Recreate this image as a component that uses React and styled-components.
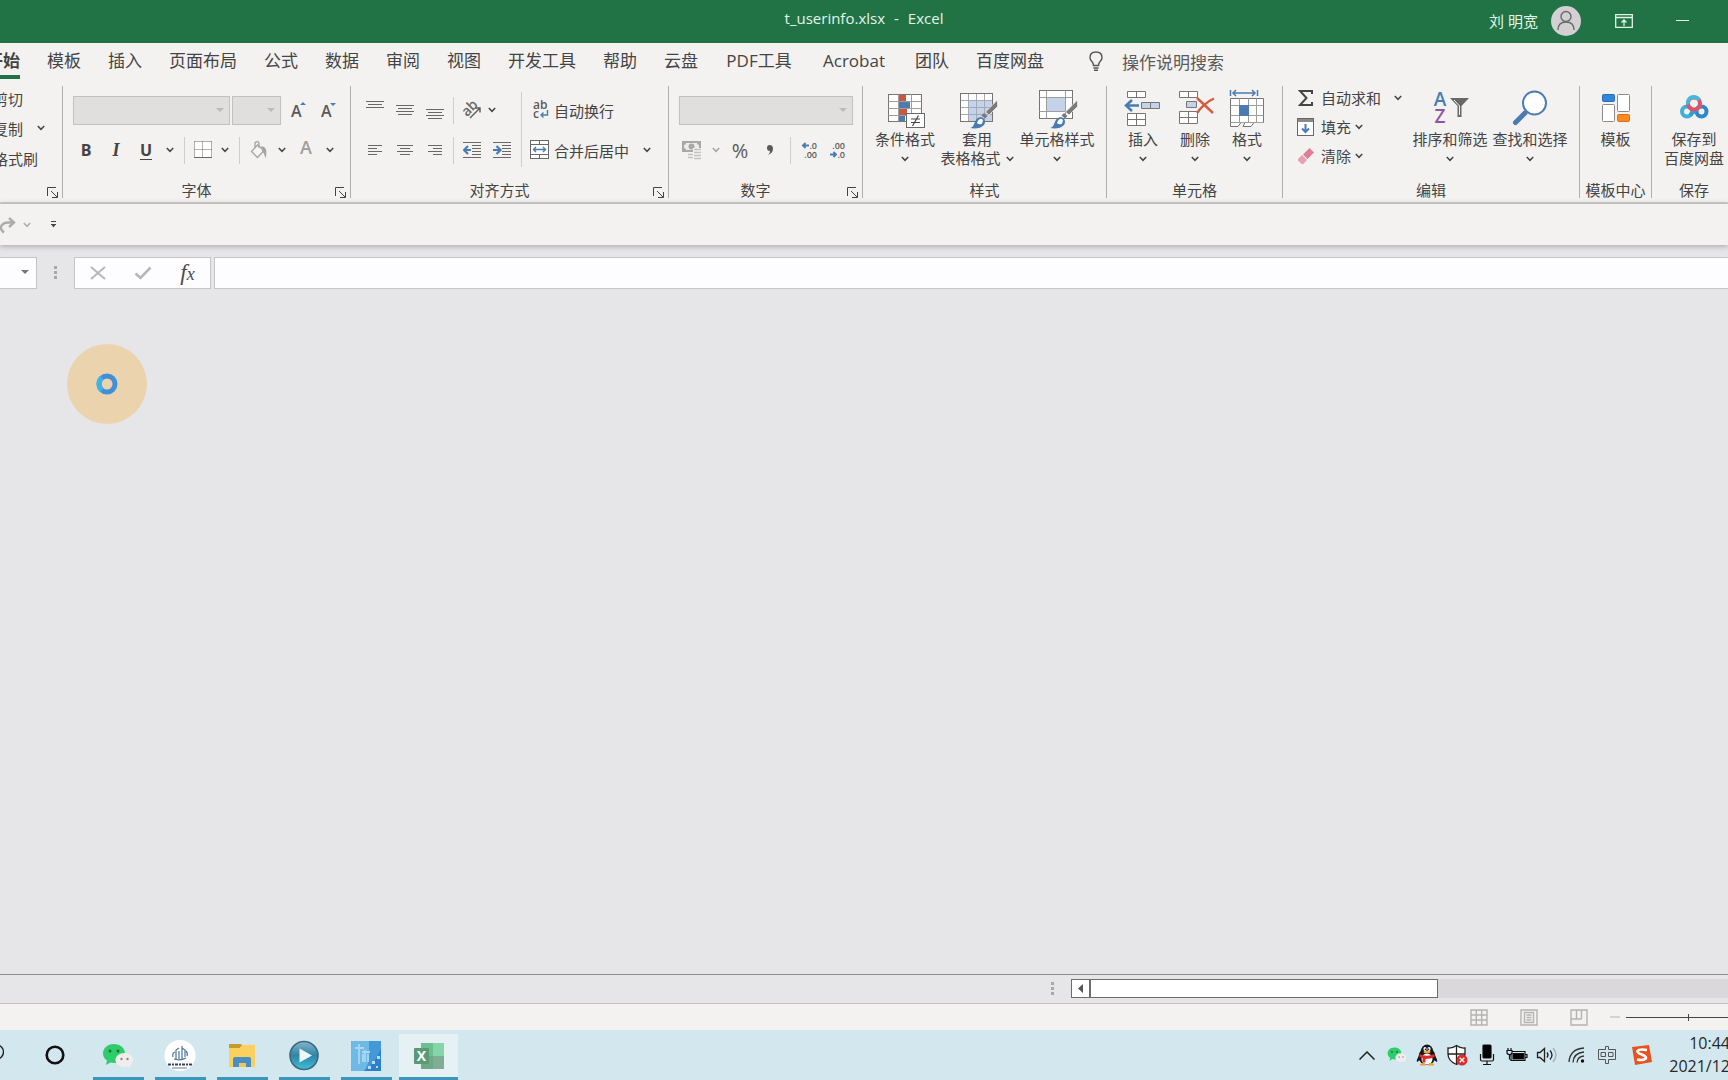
import React from 'react';
import styled, { createGlobalStyle, ThemeProvider } from 'styled-components';

const theme = {
  green: '#217346',
  ribbon: '#f3f2f1',
  sheet: '#e6e6e8',
  text: '#444444',
  line: '#b1afad',
  blue: '#4a7cb3',
  grey: '#6a6866',
  taskbar: '#d3e7ee',
};

const GlobalStyle = createGlobalStyle`
  * { box-sizing: border-box; }
  body {
    margin: 0;
    overflow: hidden;
    font-family: "Open Sans", "Noto Sans CJK SC", sans-serif;
    font-size: 15px;
    color: #444444;
  }
  button, input, select { font: inherit; color: inherit; }
  svg { display: block; flex: none; }
`;

const Window = styled.div`
  display: flex;
  flex-direction: column;
  height: 100vh;
  overflow: hidden;
  background: ${(props) => props.theme.sheet};
`;

const PlainButton = styled.button`
  display: flex;
  align-items: center;
  justify-content: center;
  flex: none;
  padding: 0;
  border: 0;
  background: none;
  white-space: nowrap;
`;

/* ---------- title bar ---------- */

const TitleBar = styled.header`
  display: grid;
  grid-template-columns: 1fr auto 1fr;
  align-items: center;
  flex: none;
  height: 43px;
  background: ${(props) => props.theme.green};
  color: #e2f5e9;
`;

const Title = styled.h1`
  grid-column: 2;
  display: flex;
  gap: 9px;
  margin: 0;
  padding-bottom: 8px;
  font-size: 15px;
  font-weight: 400;
  line-height: 20px;
`;

const TitleTools = styled.div`
  display: flex;
  align-items: center;
  justify-content: flex-end;
  padding: 0 17px 2px 0;
`;

const User = styled(PlainButton)`
  gap: 13px;
  margin-right: 14px;
`;

const TitleButton = styled(PlainButton)`
  width: 58px;
  height: 40px;
`;

/* ---------- tabs ---------- */

const Top = styled.div`
  flex: none;
  background: ${(props) => props.theme.ribbon};
`;

const TabBar = styled.nav`
  display: flex;
  flex: none;
  gap: 27px;
  height: 43px;
  margin-left: -14px;
  font-size: 17px;
`;

const Tab = styled.a`
  min-width: ${(props) => (props.$wide ? '4em' : '2em')};
  height: 36px;
  line-height: 36px;
  color: inherit;
  text-align: center;
  text-decoration: none;
  white-space: nowrap;
  font-weight: ${(props) => (props.$active ? 700 : 400)};
  border-bottom: 4px solid ${(props) => (props.$active ? props.theme.green : 'transparent')};
`;

const TellMe = styled(PlainButton)`
  gap: 19px;
  height: 36px;
  margin-left: 18px;
  color: #5c5a58;
`;

/* ---------- ribbon ---------- */

const Ribbon = styled.div`
  display: flex;
  height: 118px;
  border-bottom: 2px solid #d2d0ce;
`;

const GroupBox = styled.section`
  display: flex;
  flex-direction: column;
  flex: none;
  width: ${(props) => props.$width}px;
  height: 112px;
  border-right: 1px solid ${(props) => props.theme.line};
  &:last-child {
    border-right: 0;
  }
`;

const GroupBody = styled.div`
  display: flex;
  flex: 1;
  padding-left: ${(props) => props.$pad || 0}px;
`;

const GroupFooter = styled.div`
  display: flex;
  align-items: center;
  height: 18px;
`;

const GroupLabel = styled.div`
  flex: 1;
  padding-top: 2px;
  text-align: center;
  line-height: 18px;
  white-space: nowrap;
`;

const Launcher = styled(PlainButton)`
  width: 20px;
  height: 18px;
  align-items: flex-end;
`;

const Stack = styled.div`
  display: flex;
  flex-direction: column;
  flex: none;
  width: ${(props) => (props.$width ? `${props.$width}px` : 'auto')};
  margin-top: ${(props) => (props.$dense ? -3 : 4)}px;
`;

const ToolRow = styled.div`
  display: flex;
  align-items: center;
  height: ${(props) => props.$height || 40}px;
`;

const ClipRow = styled.div`
  display: flex;
  align-items: center;
  height: 30px;
  margin-left: -7px;
  white-space: nowrap;
`;

const Tool = styled(PlainButton)`
  width: ${(props) => (props.$width ? `${props.$width}px` : 'auto')};
  height: 28px;
`;

const ToolIcon = styled.span`
  display: flex;
  justify-content: center;
  width: ${(props) => props.$width}px;
`;

const Letter = styled.span`
  font-size: ${(props) => (props.$italic ? 18 : 16)}px;
  font-weight: 700;
  font-style: ${(props) => (props.$italic ? 'italic' : 'normal')};
  font-family: ${(props) => (props.$italic ? '"Liberation Serif", serif' : 'inherit')};
  text-decoration: ${(props) => (props.$underline ? 'underline' : 'none')};
  text-underline-offset: 3px;
`;

const Percent = styled.span`
  font-size: 20px;
  color: #5c5a58;
`;

const Divider = styled.span`
  flex: none;
  width: 1px;
  height: ${(props) => props.$height || 27}px;
  margin: ${(props) => props.$top || 0}px ${(props) => props.$gap || 5}px 0;
  background: #cfcdcb;
`;

const ComboBox = styled.label`
  display: grid;
  align-items: center;
  width: ${(props) => props.$width}px;
  height: 29px;
  margin-left: 2px;
  > * {
    grid-area: 1 / 1;
  }
  svg {
    justify-self: end;
    margin-right: 6px;
  }
`;

const ComboSelect = styled.select`
  appearance: none;
  width: 100%;
  height: 100%;
  border: 1px solid #c3c1c0;
  border-radius: 0;
  background: #e1dfde;
  opacity: 1;
`;

const BigButton = styled.button`
  display: flex;
  flex-direction: column;
  align-items: center;
  flex: none;
  width: ${(props) => props.$width}px;
  padding: 0;
  border: 0;
  background: none;
  line-height: 19px;
  white-space: nowrap;
`;

const BigLine = styled.span`
  display: flex;
  align-items: center;
  gap: 5px;
  height: 19px;
`;

/* ---------- quick access + formula bar ---------- */

const QuickAccess = styled.div`
  display: flex;
  align-items: center;
  height: 41px;
  box-shadow: 0 1px 6px rgba(0, 0, 0, 0.3);
`;

const FormulaBar = styled.div`
  display: flex;
  flex: none;
  height: 44px;
  padding-top: 12px;
`;

const NameBox = styled.div`
  display: flex;
  width: 37px;
  height: 32px;
  border: 1px solid #c6c4c6;
  border-left: 0;
  background: #fdfcff;
`;

const BareInput = styled.input`
  flex: 1;
  min-width: 0;
  width: 100%;
  padding: 0 4px;
  border: 0;
  outline: 0;
  background: transparent;
`;

const Grip = styled.span`
  display: flex;
  align-items: center;
  justify-content: center;
  width: 37px;
`;

const FormulaButtons = styled.div`
  display: flex;
  margin-right: 3px;
  border: 1px solid #c6c4c6;
  background: #fdfcff;
`;

const FormulaButton = styled(PlainButton)`
  width: 45px;
  height: 30px;
`;

const Fx = styled.span`
  font-family: "Liberation Serif", serif;
  font-style: italic;
  font-size: 23px;
  line-height: 24px;
  color: #4c4a4c;
  small {
    font-size: 18px;
  }
`;

const FormulaField = styled.div`
  display: flex;
  flex: 1;
  border: 1px solid #c6c4c6;
  border-right: 0;
  background: #fdfcff;
`;

/* ---------- work area ---------- */

const Canvas = styled.main`
  position: relative;
  flex: 1;
`;

const BusyPointer = styled.div`
  position: absolute;
  left: 67px;
  top: 55px;
  display: flex;
  align-items: center;
  justify-content: center;
  width: 80px;
  height: 80px;
  border-radius: 50%;
  background: #ebd3ae;
`;

const SheetBar = styled.div`
  display: flex;
  align-items: center;
  justify-content: flex-end;
  flex: none;
  height: 30px;
  padding-bottom: 1px;
  border-top: 1px solid #8f8d8f;
  border-bottom: 1px solid #c4c2c4;
`;

const ScrollBar = styled.div`
  display: flex;
  flex: 0 0 38%;
  height: 19px;
  background: #dad8da;
`;

const ScrollArrow = styled(PlainButton)`
  width: 19px;
  border: 1px solid #6e6c6e;
  background: #ffffff;
`;

const ScrollThumb = styled.div`
  width: 53%;
  border: 1px solid #6e6c6e;
  background: #ffffff;
`;

const StatusWrap = styled.div`
  flex: none;
  overflow: hidden;
  background: ${(props) => props.theme.ribbon};
`;

const StatusBar = styled.footer`
  display: flex;
  align-items: center;
  justify-content: flex-end;
  height: 26px;
  margin-right: -22px;
`;

const ViewButton = styled(PlainButton)`
  width: 50px;
`;

const ZoomOut = styled(PlainButton)`
  width: 22px;
  height: 20px;
`;

const ZoomSlider = styled.input`
  appearance: none;
  width: 124px;
  height: 20px;
  margin: 0;
  background:
    linear-gradient(#484644, #484644) center / 1px 7px no-repeat,
    linear-gradient(#484644, #484644) center / 100% 1px no-repeat;
  &::-webkit-slider-thumb {
    appearance: none;
    width: 5px;
    height: 13px;
    background: #484644;
  }
`;

/* ---------- taskbar ---------- */

const TaskBar = styled.div`
  display: flex;
  flex: none;
  height: 50px;
  background: ${(props) => props.theme.taskbar};
`;

const SystemButton = styled(PlainButton)`
  width: ${(props) => props.$width}px;
  height: 50px;
`;

const SearchShift = styled.span`
  margin-left: -36px;
`;

const TaskSlot = styled.div`
  display: flex;
  width: 62px;
  padding: ${(props) => (props.$active ? '4px 1px 0 2px' : '4px 5px 0 6px')};
`;

const TaskButton = styled(PlainButton)`
  flex: 1;
  height: 46px;
  padding-right: 2px;
  border-bottom: 3px solid #3a97bb;
  background: ${(props) => (props.$active ? '#e6f1f6' : 'none')};
`;

const Tray = styled.div`
  display: flex;
  align-items: center;
  margin-left: auto;
  margin-right: -2px;
`;

const TrayButton = styled(PlainButton)`
  width: ${(props) => props.$width || 30}px;
  height: 50px;
`;

const Clock = styled.div`
  display: flex;
  flex-direction: column;
  align-items: flex-end;
  padding-left: 7px;
  font-size: 16px;
  line-height: 23px;
  color: #26282b;
`;

/* ---------- small glyphs ---------- */

const Chevron = ({ color = '#444' }) => (
  <svg width="8" height="6" viewBox="0 0 8 6" fill="none" stroke={color} strokeWidth="1.5">
    <path d="M.8 1 4 4.3 7.2 1" />
  </svg>
);

const Triangle = ({ color = '#bdbbba' }) => (
  <svg width="8" height="4" viewBox="0 0 8 4" fill={color}>
    <path d="M0 0h8L4 4z" />
  </svg>
);

const Dots = () => (
  <svg width="4" height="14" viewBox="0 0 4 14" fill="#a9a7a9">
    <path d="M0 0h3v3H0zM0 5h3v3H0zM0 10h3v3H0z" />
  </svg>
);

const Lines = ({ rows }) => (
  <svg width="18" height="20" viewBox="0 0 18 20" stroke="#6a6866">
    {rows.map(([x1, x2, y]) => (
      <path key={y} d={`M${x1} ${y}.5H${x2}`} />
    ))}
  </svg>
);

const alignTop = [[0, 18, 1], [2, 16, 4], [0, 18, 7]];
const alignMiddle = [[0, 18, 5], [2, 16, 8], [0, 18, 11], [2, 16, 14]];
const alignBottom = [[0, 18, 9], [2, 16, 12], [0, 18, 15], [2, 16, 18]];
const alignLeft = [[2, 16, 5], [2, 11, 8], [2, 16, 11], [2, 11, 14]];
const alignCenter = [[1, 17, 5], [4, 14, 8], [1, 17, 11], [4, 14, 14]];
const alignRight = [[2, 16, 5], [7, 16, 8], [2, 16, 11], [7, 16, 14]];

const GrowFont = ({ down }) => (
  <svg width="16" height="20" viewBox="0 0 16 20">
    <text x="0" y="17" fontSize="16" fontWeight="600" fill="#5c5a58">A</text>
    <path d={down ? 'M9 3h6l-3 3z' : 'M9 5h6l-3-3z'} fill="#4a7cb3" />
  </svg>
);

const BordersIcon = () => (
  <svg width="18" height="18" viewBox="0 0 18 18" fill="none" stroke="#6a6866">
    <path d="M.5 .5h17v16H.5z" fill="#fff" stroke="none" />
    <path d="M.5 .5h17M.5 8.5h17M.5 .5v16M8.5 .5v16M17.5 .5v16" strokeDasharray="1 1" />
    <path d="M0 16.5h18" />
  </svg>
);

const BucketIcon = () => (
  <svg width="18" height="18" viewBox="0 0 18 18" fill="none" stroke="#a6a4a2" strokeWidth="1.3">
    <path d="M7.500 4 1.500 10.500l6 6L14 9.500z" fill="#f5f4f3" />
    <path d="M5 7V3q0-2.300 2-2.300T9 3v4" />
    <path d="M12 6q5 1 3.500 9-2-5-3-6z" fill="#a6a4a2" />
  </svg>
);

const OrientationIcon = () => (
  <svg width="20" height="20" viewBox="0 0 20 20">
    <text x="1" y="14" fontSize="14" fontWeight="600" fill="#6a6866" transform="rotate(-45 7 11)">ab</text>
    <path d="M8 18 18 8M13.500 8H18v4.500" fill="none" stroke="#5c5a58" strokeWidth="1.400" />
  </svg>
);

const IndentIcon = ({ right }) => (
  <svg width="18" height="18" viewBox="0 0 18 18">
    <path d="M0 1.500h18M9 4.500h9M9 7.500h9M9 10.500h9M9 13.500h9M0 16.500h18" stroke="#6a6866" />
    <path
      d={right ? 'M0 9h6M3.500 5l4 4-4 4' : 'M8 9H2M5 5 1 9l4 4'}
      fill="none"
      stroke="#4a7cb3"
      strokeWidth="2.200"
    />
  </svg>
);

const WrapIcon = () => (
  <svg width="18" height="20" viewBox="0 0 18 20">
    <text x="2" y="9" fontSize="12" fontWeight="600" fill="#5c5a58">ab</text>
    <text x="2" y="18" fontSize="12" fontWeight="600" fill="#5c5a58">c</text>
    <path d="M16.500 10v5H10M12.500 12.500 10 15l2.500 2.500" fill="none" stroke="#4a7cb3" strokeWidth="1.400" />
  </svg>
);

const MergeIcon = () => (
  <svg width="20" height="20" viewBox="0 0 20 20" fill="none" stroke="#6a6866">
    <rect x=".5" y=".5" width="18" height="18" fill="#fff" />
    <path d="M.5 4.500h18M.5 14.500h18M9.500 .5v4M9.500 14.500v4" />
    <path d="M3.500 9.500h12M6 7 3.500 9.500 6 12M13 7l2.500 2.500L13 12" stroke="#4a7cb3" strokeWidth="1.400" />
  </svg>
);

const CurrencyIcon = () => (
  <svg width="20" height="20" viewBox="0 0 20 20">
    <rect x="0" y="1" width="19" height="11" fill="#aaa8a6" />
    <path d="M4 3h11q0 2 2 2v3q-2 0-2 2H4q0-2-2-2V5q2 0 2-2z" fill="#efedec" />
    <circle cx="9.500" cy="6.500" r="3" fill="#aaa8a6" />
    <rect x="11" y="8" width="9" height="11" fill="#f3f2f1" />
    <path d="M12 9.500h7M12 12.500h7M6 14.500h5M12 15.500h7M6 17.500h5M12 18.500h7" stroke="#c4c2c0" strokeWidth="1.500" />
  </svg>
);

const DecimalIcon = ({ more }) => (
  <svg width="20" height="20" viewBox="0 0 20 20" fontSize="9" fontWeight="600" fill="#5c5a58">
    <text x="17" y="9" textAnchor="end">{more ? '.0' : '.00'}</text>
    <text x="17" y="18" textAnchor="end">{more ? '.00' : '.0'}</text>
    <path
      d={more ? 'M9 5.500H3M5.500 3 3 5.500 5.500 8' : 'M2 14.500h6M5.500 12 8 14.500 5.500 17'}
      fill="none"
      stroke="#4a7cb3"
      strokeWidth="1.900"
    />
  </svg>
);

const LauncherIcon = () => (
  <svg width="11" height="11" viewBox="0 0 11 11" fill="none" stroke="#444">
    <path d="M.5 9V.5H9M4 4l6 6M10.500 5v5.500H5" />
  </svg>
);

/* ---------- large ribbon drawings ---------- */

const Big = (props) => (
  <svg width="40" height="44" viewBox="0 0 40 44" fill="none" overflow="visible" {...props} />
);

const Brush = () => (
  <g>
    <path d="M40.500 14v6.500L32 29l-3.500-3z" fill="#7c7a78" stroke="#fff" strokeWidth=".6" />
    <path d="m27 27 3.500 3-2.500 2.500-3.500-3z" fill="#7c7a78" />
    <path d="M13 42c6-1 3-10 11-11 4 1 5 5 3 8-3 3.500-9 4-14 3z" fill="#4a7cb3" />
    <path d="M20 37q2-5 5-4 2 2-.5 5-2.500 1-4.500-1z" fill="#fff" />
  </g>
);

const ConditionalIcon = () => (
  <Big>
    <rect x="3.500" y="8.500" width="33" height="27" fill="#fff" stroke="#777573" />
    <path d="M3.500 15.500h33M3.500 22.500h33M3.500 29.500h33M13.500 8.500v27M26.500 8.500v27" stroke="#a09e9c" />
    <path d="M14 9h7v6h-7zM14 23h8v6h-8z" fill="#c8593f" />
    <path d="M14 16h11v6H14zM14 30h6v5h-6z" fill="#4a7cb3" />
    <rect x="21.500" y="27.500" width="18" height="14" fill="#fff" stroke="#6a6866" />
    <path d="M26 33h9M26 36.500h9M33.500 29.500l-6 10.500" stroke="#444" strokeWidth="1.200" />
  </Big>
);

const TableIcon = () => (
  <Big>
    <rect x="3.500" y="7.500" width="32" height="28" fill="#fff" />
    <path d="M12 15h23v20H12z" fill="#c5d3ea" />
    <path d="M3.500 14.500h32M3.500 21.500h32M3.500 28.500h32M11.500 7.500v28M19.500 7.500v28M27.500 7.500v28" stroke="#a3a9b5" />
    <rect x="3.500" y="7.500" width="32" height="28" stroke="#777573" />
    <Brush />
  </Big>
);

const CellStyleIcon = () => (
  <Big>
    <rect x="2.500" y="4.500" width="33" height="28" fill="#fff" stroke="#777573" />
    <path d="M10 12h18v13H10z" fill="#c5d3ea" />
    <path d="M2.500 11.500h33M2.500 25.500h33M9.500 4.500v28M28.500 4.500v28" stroke="#a09e9c" />
    <Brush />
  </Big>
);

const InsertIcon = () => (
  <Big stroke="#777573">
    <path d="M4.500 5.500h18v6h-18zM13.500 5.500v6M4.500 27.500h18v12h-18zM13.500 27.500v12M4.500 33.500h18" fill="#fff" />
    <path d="M18.500 16.500h18v6h-18zM27.500 16.500v6" fill="#c5d3ea" />
    <path d="M16 19.500H3M9 14l-6 5.500L9 25" stroke="#4a7cb3" strokeWidth="2.500" />
  </Big>
);

const DeleteIcon = () => (
  <Big stroke="#777573">
    <path d="M4.500 5.500h18v6h-18zM13.500 5.500v6M4.500 25.500h18v12h-18zM13.500 25.500v12M4.500 31.500h18" fill="#fff" />
    <path d="M11.500 15.500h10v6h-10z" fill="#c5d3ea" />
    <path d="m22 12 16 15M39 12.500Q29 17 22 27" stroke="#d65b3d" strokeWidth="2.400" />
  </Big>
);

const FormatIcon = () => (
  <Big stroke="#777573">
    <path d="M3.500 4v6M30.500 4v6M6 7h22M9 4 6 7l3 3M25 4l3 3-3 3" stroke="#4a7cb3" strokeWidth="1.500" />
    <path d="M3.500 12.500h33v24H27l-3 4h-8l2-4h-4l-3 4H3.500z" fill="#fff" />
    <path d="M3.500 19.500h33M3.500 29.500h33M3.500 36.500h33M12.500 12.500v24M21.500 12.500v24M29.500 12.500v24" stroke="#a09e9c" />
    <path d="M12 19h10v11H12z" fill="#4a7cb3" stroke="none" />
  </Big>
);

const SortIcon = () => (
  <Big>
    <text x="10" y="20" fontSize="19" fontWeight="600" textAnchor="middle" fill="#4a7cb3">A</text>
    <text x="10" y="37" fontSize="19" fontWeight="600" textAnchor="middle" fill="#8f57a3">Z</text>
    <path d="M20 12h19l-7.500 8v11h-4V20z" fill="#6a6866" />
    <path d="m24 14 5.500 6v9" stroke="#f3f2f1" />
  </Big>
);

const FindIcon = () => (
  <Big stroke="#4a7cb3">
    <path d="M15 27 5.500 36.500" strokeWidth="5" strokeLinecap="round" />
    <circle cx="24.500" cy="17" r="11.500" fill="#fff" strokeWidth="2" />
  </Big>
);

const TemplateIcon = () => (
  <Big>
    <rect x="6.500" y="8.500" width="12" height="7" rx="1" fill="#2f88e0" stroke="#2b6cb5" />
    <rect x="21.500" y="8.500" width="12" height="17" rx="1" fill="#fff" stroke="#8d8b89" />
    <rect x="6.500" y="18.500" width="12" height="17" rx="1" fill="#fff" stroke="#8d8b89" />
    <rect x="21.500" y="28.500" width="12" height="7" rx="1" fill="#ff8a1c" stroke="#d4711a" />
  </Big>
);

const NetdiskIcon = () => (
  <Big strokeWidth="4">
    <circle cx="13" cy="25.500" r="5" stroke="#3cb2d8" />
    <circle cx="27.500" cy="25.500" r="5" stroke="#2f86c9" />
    <path d="m16 29 10-9" stroke="#2f9fd0" />
    <circle cx="20" cy="17.500" r="6" stroke="#e0526a" />
    <path d="M14 18.500a6 6 0 0 1 11-4.500" stroke="#45b9dc" />
  </Big>
);

const SigmaIcon = () => (
  <svg width="16" height="18" viewBox="0 0 16 18" fill="none" stroke="#444" strokeWidth="2">
    <path d="M14 5V2H2l6.500 7L2 16h12v-3" />
  </svg>
);

const FillIcon = () => (
  <svg width="18" height="18" viewBox="0 0 18 18" fill="none">
    <rect x=".5" y=".5" width="16" height="17" fill="#fff" stroke="#6a6866" />
    <path d="M1 1h15v3H1z" fill="#8a8886" />
    <path d="M8.500 6v8M5 10.500 8.500 14l3.500-3.500" stroke="#4a7cb3" strokeWidth="2" />
  </svg>
);

const EraserIcon = () => (
  <svg width="18" height="18" viewBox="0 0 18 18">
    <path d="m1 12 4-4 5 5-3.500 4H4.500L1 13.500z" fill="#e8a0b4" />
    <path d="M6 7.500 12.500 1 17 5.500 10.500 12z" fill="#df7c98" />
  </svg>
);

/* ---------- taskbar drawings ---------- */

const WechatIcon = ({ size = 32 }) => (
  <svg width={size} height={size} viewBox="0 0 32 32">
    <path d="M12 4C5 4 1 8.500 1 13.500c0 3 1.600 5.500 4 7L4 25l4.500-2.500c1 .3 2.300.5 3.500.5 6 0 11-4 11-9.500S18 4 12 4z" fill="#2ecc6b" />
    <circle cx="8" cy="11" r="1.500" fill="#1d6b3c" />
    <circle cx="16" cy="11" r="1.500" fill="#1d6b3c" />
    <path d="M22.500 13c-5 0-9 3-9 7s4 7 9 7c1 0 2-.2 3-.5l3.500 1.500-.8-3c2-1.200 3-3 3-5 0-4-3.700-7-8.700-7z" fill="#f1edec" />
    <circle cx="19.500" cy="19" r="1.200" fill="#8d8b89" />
    <circle cx="25.500" cy="19" r="1.200" fill="#8d8b89" />
  </svg>
);

const NavicatIcon = () => (
  <svg width="32" height="32" viewBox="0 0 32 32" fill="none">
    <circle cx="16" cy="15.500" r="15.500" fill="#fff" />
    <path d="M9 17q-1-4 2-5M12 19V10l3-2M15 19v-8M18 20V6M21 17v-7l-3-2M23 16q1-3-1-5M10 19q6 2 12-1" stroke="#4c7597" strokeWidth="1.200" />
    <path d="M4 24.500h24" stroke="#35405e" strokeWidth="2" strokeDasharray="3 1 2 1" />
    <path d="M8 28h15" stroke="#6f7791" />
  </svg>
);

const FolderIcon = () => (
  <svg width="32" height="32" viewBox="0 0 32 32">
    <path d="M3 4h12l2 3h-3v3H3z" fill="#c99a2a" />
    <path d="M3 8h11l2-3h13v22H3z" fill="#fbd05f" />
    <path d="M7 27V19q0-2 2-2h14q2 0 2 2v8h-5v-4h-7v4z" fill="#4a8fc4" />
    <path d="M13 23h7v4h-7z" fill="#f7c647" />
  </svg>
);

const PlayerIcon = () => (
  <svg width="32" height="32" viewBox="0 0 32 32">
    <defs>
      <linearGradient id="player" x1="0" y1="0" x2="0" y2="1">
        <stop offset="0" stopColor="#86b4c8" />
        <stop offset=".5" stopColor="#2f85a8" />
        <stop offset="1" stopColor="#3fc0d8" />
      </linearGradient>
    </defs>
    <circle cx="16" cy="15.500" r="14" fill="url(#player)" stroke="#3b6b80" strokeWidth="1.600" />
    <path d="M11.500 8.500 24 15.500l-12.500 7z" fill="#eef6fa" />
  </svg>
);

const DictIcon = () => (
  <svg width="32" height="32" viewBox="0 0 32 32">
    <path d="M1 1h30v30H1z" fill="#6fb9e6" />
    <path d="M31 1v30H14Q26 18 31 1z" fill="#2b7fcb" />
    <path d="M19 1h12v8q-5 12-16 22L19 20z" fill="#4398d8" />
    <path d="M5 8h9M9 4v20M12 12h8M15 10v12M13 22v-8M18 22v-8" stroke="#a9d6f0" strokeWidth="1.800" fill="none" />
    <path d="M22 21h3v3h-3zM27 16h3v3h-3zM18 26h3v3h-3zM26 26h2v2h-2z" fill="#b9dcf2" />
  </svg>
);

const ExcelIcon = () => (
  <svg width="32" height="32" viewBox="0 0 32 32">
    <path d="M9 3h12v13H9z" fill="#6fbd90" />
    <path d="M21 3h11v13H21z" fill="#84d6a9" />
    <path d="M9 16h12v13H9z" fill="#6fa889" />
    <path d="M21 16h11v13H21z" fill="#80ae94" />
    <rect x="2" y="8" width="15" height="16" rx="1" fill="#569b74" />
    <text x="9.500" y="21" fontSize="14" fontWeight="700" textAnchor="middle" fill="#fff">X</text>
  </svg>
);

const Ring = () => (
  <svg width="22" height="22" viewBox="0 0 22 22" fill="none">
    <circle cx="11" cy="11" r="8.300" stroke="#111" strokeWidth="2.600" />
  </svg>
);

const SearchIcon = () => (
  <svg width="22" height="22" viewBox="0 0 22 22" fill="none" stroke="#222" strokeWidth="1.400">
    <circle cx="14.500" cy="8" r="7" />
    <path d="m9 13-7 8" />
  </svg>
);

const PenguinIcon = () => (
  <svg width="22" height="22" viewBox="0 0 22 22">
    <path d="M3 12q-3 4-2 6l3-2zM19 12q3 4 2 6l-3-2z" fill="#15171a" />
    <ellipse cx="11" cy="12.500" rx="8.500" ry="8.500" fill="#15171a" />
    <ellipse cx="11" cy="7" rx="6" ry="6.500" fill="#15171a" />
    <ellipse cx="11" cy="15" rx="5.500" ry="5.500" fill="#fff" />
    <ellipse cx="9" cy="5" rx="1.600" ry="2" fill="#fff" />
    <ellipse cx="13" cy="5" rx="1.600" ry="2" fill="#fff" />
    <circle cx="9.400" cy="5.200" r=".7" />
    <circle cx="12.600" cy="5.200" r=".7" />
    <ellipse cx="11" cy="8" rx="3.500" ry="1.300" fill="#f2a53a" />
    <path d="M3.500 10q7.500 3.500 15 0v3q-4 2-9 2v3.500H6.500V14L3.500 13z" fill="#dd2b2b" />
    <path d="M4 20q3-2 6 0v1.500H4zM12 20q3-2 6 0v1.500h-6z" fill="#eda03a" />
  </svg>
);

const ShieldIcon = () => (
  <svg width="22" height="22" viewBox="0 0 22 22" fill="none">
    <path d="M10.500 1.500q4 3 8.500 2.500v6q0 7-8.500 10.500Q2 17 2 10V4q4.500.5 8.500-2.500z" fill="#fff" stroke="#222" strokeWidth="1.300" />
    <path d="M10.500 2v18M2 10h17" stroke="#222" strokeWidth="1.300" />
    <circle cx="16" cy="16" r="5.500" fill="#dc2b2b" />
    <path d="m13.700 13.700 4.600 4.600m0-4.600-4.600 4.600" stroke="#fff" strokeWidth="1.300" />
  </svg>
);

const MicIcon = () => (
  <svg width="16" height="22" viewBox="0 0 16 22" fill="none" stroke="#111" strokeWidth="1.200">
    <rect x="4" y="1" width="8" height="13" rx="1" fill="#000" />
    <path d="M1.500 10v5.500q0 1.500 1.500 1.500h10q1.500 0 1.500-1.500V10M8 17v3M4 20.500h8" />
  </svg>
);

const BatteryIcon = () => (
  <svg width="22" height="18" viewBox="0 0 22 18" fill="none" stroke="#111" strokeWidth="1.200">
    <path d="M5 5.500h14v9H5zM19.500 8.500h1.500v3h-1.500" />
    <path d="M7 7.500h10.500v5.500H7z" fill="#000" />
    <path d="M2 2v3M5 2v3M1 4.500h5v2q0 2-2.500 2t-2.500-2zM3.500 9v4H5" fill="#d3e7ee" />
  </svg>
);

const VolumeIcon = () => (
  <svg width="22" height="18" viewBox="0 0 22 18" fill="none" stroke="#222" strokeWidth="1.300">
    <path d="M1.500 6.500H4L8.500 2.500v13L4 11.500H1.500zM11 6.500q2 2.500 0 5M14 4.500q4 4.500 0 9" />
    <path d="M17 2q6 7 0 14" stroke="#9fb2b9" />
  </svg>
);

const WifiIcon = () => (
  <svg width="20" height="20" viewBox="0 0 20 20" fill="none" stroke="#333" strokeWidth="1.300">
    <path d="M2 17Q3 4 17 3M6 17.500Q6.500 8 17 7M10 17.500q.5-6 7-6.500" />
    <circle cx="15.500" cy="16" r="1.700" fill="#111" stroke="none" />
  </svg>
);

const ImeIcon = () => (
  <svg width="18" height="18" viewBox="0 0 18 18" fill="none" stroke="#555">
    <path d="M7.500 .5h3v3h7v10h-7v4h-3v-4h-7v-10h7zM3 6.500v4h4.500v-4zM10.500 6.500v4H15v-4z" />
  </svg>
);

const SogouIcon = () => (
  <svg width="22" height="22" viewBox="0 0 22 22" fill="none">
    <path d="m1 3 17-2 3 17-17 3z" fill="#e8521f" />
    <path d="M16 6q-8-1.500-9.500 1C6 11 15 10 15 14q-2 3-9 1.500" stroke="#fff" strokeWidth="2.600" />
  </svg>
);

/* ---------- composed parts ---------- */

const Group = ({ label, width, pad, launcher, children }) => (
  <GroupBox $width={width} aria-label={label || '剪贴板'}>
    <GroupBody $pad={pad}>{children}</GroupBody>
    <GroupFooter>
      <GroupLabel>{label}</GroupLabel>
      {launcher && (
        <Launcher aria-label="更多">
          <LauncherIcon />
        </Launcher>
      )}
    </GroupFooter>
  </GroupBox>
);

const DropArrow = ({ width = 18, color }) => (
  <Tool $width={width} aria-label="展开">
    <Chevron color={color} />
  </Tool>
);

const Combo = ({ width, label }) => (
  <ComboBox $width={width}>
    <ComboSelect disabled aria-label={label} />
    <Triangle />
  </ComboBox>
);

const BigTool = ({ icon, label, second, width, arrow = true }) => (
  <BigButton $width={width}>
    {icon}
    <BigLine>{label}</BigLine>
    <BigLine>
      {second}
      {arrow && <Chevron />}
    </BigLine>
  </BigButton>
);

const EditTool = ({ icon, label, arrow }) => (
  <ToolRow $height={29}>
    <Tool>
      <ToolIcon $width={30}>{icon}</ToolIcon>
      {label}
    </Tool>
    <DropArrow width={arrow} />
  </ToolRow>
);

const tabs = [
  '开始', '模板', '插入', '页面布局', '公式', '数据', '审阅', '视图',
  '开发工具', '帮助', '云盘', 'PDF工具', 'Acrobat', '团队', '百度网盘',
];

const tasks = [
  { name: '微信', icon: <WechatIcon /> },
  { name: 'Navicat', icon: <NavicatIcon /> },
  { name: '文件资源管理器', icon: <FolderIcon /> },
  { name: '播放器', icon: <PlayerIcon /> },
  { name: '词典', icon: <DictIcon /> },
  { name: 'Excel', icon: <ExcelIcon />, active: true },
];

const tray = [
  { name: '微信', icon: <WechatIcon size={20} /> },
  { name: 'QQ', icon: <PenguinIcon /> },
  { name: '安全中心', icon: <ShieldIcon /> },
  { name: '麦克风', icon: <MicIcon /> },
  { name: '电源', icon: <BatteryIcon /> },
  { name: '音量', icon: <VolumeIcon /> },
  { name: '网络', icon: <WifiIcon /> },
  { name: '中文输入', icon: <ImeIcon /> },
];

const App = () => (
  <ThemeProvider theme={theme}>
    <GlobalStyle />
    <Window>
      <TitleBar>
        <Title>
          <span>t_userinfo.xlsx</span>
          <span>-</span>
          <span>Excel</span>
        </Title>
        <TitleTools>
          <User>
            刘 明宽
            <svg width="30" height="30" viewBox="0 0 30 30" fill="none" stroke="#6b696b" strokeWidth="1.400">
              <circle cx="15" cy="15" r="15" fill="#d2d0d2" stroke="none" />
              <circle cx="15" cy="10.500" r="5" />
              <path d="M7 24q0-8 8-8t8 8" />
            </svg>
          </User>
          <TitleButton aria-label="功能区显示选项">
            <svg width="28" height="14" viewBox="0 0 28 14" fill="none" stroke="#e2f5e9" strokeWidth="1.300">
              <path d="M5.700 .7h16.600v12.600H5.700zM5.700 3.500h16.600M14 12V6M11.500 8.500 14 6l2.500 2.500" />
            </svg>
          </TitleButton>
          <TitleButton aria-label="最小化">
            <svg width="13" height="3" viewBox="0 0 13 3" stroke="#e2f5e9">
              <path d="M0 1.500h13" />
            </svg>
          </TitleButton>
        </TitleTools>
      </TitleBar>

      <Top>
        <TabBar>
          {tabs.map((t, i) => (
            <Tab key={t} href="#" $active={i === 0} $wide={t.length > 3}>{t}</Tab>
          ))}
          <TellMe>
            <svg width="14" height="20" viewBox="0 0 14 20" fill="none" stroke="#555" strokeWidth="1.400">
              <path d="M4.500 14.500q0-2.500-2-4.500Q1 8.500 1 6.500q0-5.500 6-5.500t6 5.500q0 2-1.500 3.500-2 2-2 4.500zM4.500 17h5M5 19.300h4" />
            </svg>
            操作说明搜索
          </TellMe>
        </TabBar>

        <Ribbon>
          <Group width={63} launcher>
            <Stack $dense>
              <ClipRow>剪切</ClipRow>
              <ClipRow>
                复制
                <DropArrow width={36} />
              </ClipRow>
              <ClipRow>格式刷</ClipRow>
            </Stack>
          </Group>

          <Group label="字体" width={288} pad={8} launcher>
            <Stack>
              <ToolRow>
                <Combo width={157} label="字体" />
                <Combo width={49} label="字号" />
                <Tool $width={36} aria-label="增大字号"><GrowFont /></Tool>
                <Tool $width={24} aria-label="减小字号"><GrowFont down /></Tool>
              </ToolRow>
              <ToolRow>
                <Tool $width={30}><Letter>B</Letter></Tool>
                <Tool $width={30}><Letter $italic>I</Letter></Tool>
                <Tool $width={30}><Letter $underline>U</Letter></Tool>
                <DropArrow />
                <Divider />
                <Tool $width={26} aria-label="边框"><BordersIcon /></Tool>
                <DropArrow />
                <Divider />
                <Tool $width={28} aria-label="填充颜色"><BucketIcon /></Tool>
                <DropArrow />
                <Tool $width={30} aria-label="字体颜色">
                  <svg width="14" height="20" viewBox="0 0 14 20">
                    <text x="7" y="14" fontSize="18" fontWeight="600" textAnchor="middle" fill="#a09e9c">A</text>
                  </svg>
                </Tool>
                <DropArrow />
              </ToolRow>
            </Stack>
          </Group>

          <Group label="对齐方式" width={318} pad={9} launcher>
            <Stack $width={157}>
              <ToolRow>
                <Tool $width={30} aria-label="顶端对齐"><Lines rows={alignTop} /></Tool>
                <Tool $width={30} aria-label="垂直居中"><Lines rows={alignMiddle} /></Tool>
                <Tool $width={30} aria-label="底端对齐"><Lines rows={alignBottom} /></Tool>
                <Divider $gap={3} />
                <Tool $width={30} aria-label="方向"><OrientationIcon /></Tool>
                <DropArrow width={10} />
              </ToolRow>
              <ToolRow>
                <Tool $width={30} aria-label="左对齐"><Lines rows={alignLeft} /></Tool>
                <Tool $width={30} aria-label="居中"><Lines rows={alignCenter} /></Tool>
                <Tool $width={30} aria-label="右对齐"><Lines rows={alignRight} /></Tool>
                <Divider $gap={3} />
                <Tool $width={30} aria-label="减少缩进量"><IndentIcon /></Tool>
                <Tool $width={30} aria-label="增加缩进量"><IndentIcon right /></Tool>
              </ToolRow>
            </Stack>
            <Divider $height={75} $top={6} $gap={4} />
            <Stack>
              <ToolRow>
                <Tool>
                  <ToolIcon $width={28}><WrapIcon /></ToolIcon>
                  自动换行
                </Tool>
              </ToolRow>
              <ToolRow>
                <Tool>
                  <ToolIcon $width={28}><MergeIcon /></ToolIcon>
                  合并后居中
                </Tool>
                <DropArrow width={36} />
              </ToolRow>
            </Stack>
          </Group>

          <Group label="数字" width={194} pad={8} launcher>
            <Stack>
              <ToolRow>
                <Combo width={174} label="数字格式" />
              </ToolRow>
              <ToolRow>
                <Tool $width={30} aria-label="会计数字格式"><CurrencyIcon /></Tool>
                <DropArrow color="#a6a4a2" />
                <Tool $width={30}><Percent>%</Percent></Tool>
                <Tool $width={30} aria-label="千位分隔样式">
                  <svg width="8" height="12" viewBox="0 0 8 12" fill="#5c5a58">
                    <path d="M3.500 1Q7 1 7 4.500 7 9 2 11q2.500-2.500 2-4-3 0-3-3t2.500-3z" />
                  </svg>
                </Tool>
                <Divider />
                <Tool $width={28} aria-label="增加小数位数"><DecimalIcon more /></Tool>
                <Tool $width={28} aria-label="减少小数位数"><DecimalIcon /></Tool>
              </ToolRow>
            </Stack>
          </Group>

          <Group label="样式" width={244} pad={6}>
            <BigTool width={72} icon={<ConditionalIcon />} label="条件格式" />
            <BigTool width={72} icon={<TableIcon />} label="套用" second="表格格式" />
            <BigTool width={88} icon={<CellStyleIcon />} label="单元格样式" />
          </Group>

          <Group label="单元格" width={176} pad={10}>
            <BigTool width={52} icon={<InsertIcon />} label="插入" />
            <BigTool width={52} icon={<DeleteIcon />} label="删除" />
            <BigTool width={52} icon={<FormatIcon />} label="格式" />
          </Group>

          <Group label="编辑" width={297} pad={8}>
            <Stack $dense $width={119}>
              <EditTool icon={<SigmaIcon />} label="自动求和" arrow={34} />
              <EditTool icon={<FillIcon />} label="填充" arrow={16} />
              <EditTool icon={<EraserIcon />} label="清除" arrow={16} />
            </Stack>
            <BigTool width={80} icon={<SortIcon />} label="排序和筛选" />
            <BigTool width={80} icon={<FindIcon />} label="查找和选择" />
          </Group>

          <Group label="模板中心" width={72}>
            <BigTool width={71} icon={<TemplateIcon />} label="模板" arrow={false} />
          </Group>

          <Group label="保存" width={84}>
            <BigTool width={84} icon={<NetdiskIcon />} label="保存到" second="百度网盘" arrow={false} />
          </Group>
        </Ribbon>

        <QuickAccess>
          <Tool $width={18} aria-label="恢复">
            <svg width="18" height="18" viewBox="0 0 18 18" fill="none" stroke="#aeacaa" strokeWidth="2.400">
              <path d="M4 16.500q-5-4-2-7.500 2-2.500 6-2.500h6M9 2l5 4.500-5 4.500" />
            </svg>
          </Tool>
          <DropArrow color="#aeacaa" />
          <Tool $width={34} aria-label="自定义快速访问工具栏">
            <svg width="7" height="8" viewBox="0 0 7 8" fill="#444">
              <path d="M1 0h5v1H1zM1 3h5L3.500 6.500zM1 3h5v1H1z" />
            </svg>
          </Tool>
        </QuickAccess>
      </Top>

      <FormulaBar>
        <NameBox>
          <BareInput aria-label="名称框" />
          <Tool $width={22} aria-label="名称列表"><Triangle color="#777577" /></Tool>
        </NameBox>
        <Grip><Dots /></Grip>
        <FormulaButtons>
          <FormulaButton aria-label="取消">
            <svg width="16" height="14" viewBox="0 0 16 14" stroke="#b9b7b9" strokeWidth="2">
              <path d="m1 1 14 12M15 1 1 13" />
            </svg>
          </FormulaButton>
          <FormulaButton aria-label="输入">
            <svg width="18" height="14" viewBox="0 0 18 14" fill="none" stroke="#b9b7b9" strokeWidth="2.600">
              <path d="m1.500 7.500 5 4.500L16.500 1.500" />
            </svg>
          </FormulaButton>
          <FormulaButton aria-label="插入函数">
            <Fx>f<small>x</small></Fx>
          </FormulaButton>
        </FormulaButtons>
        <FormulaField>
          <BareInput aria-label="编辑栏" />
        </FormulaField>
      </FormulaBar>

      <Canvas>
        <BusyPointer>
          <svg width="22" height="22" viewBox="0 0 22 22" fill="none" strokeWidth="5">
            <circle cx="11" cy="11" r="8" stroke="#3f8fd9" />
            <path d="M6 17.200A8 8 0 0 1 6 4.800" stroke="#3cb4ea" />
          </svg>
        </BusyPointer>
      </Canvas>

      <SheetBar>
        <Grip><Dots /></Grip>
        <ScrollBar>
          <ScrollArrow aria-label="向左滚动">
            <svg width="5" height="9" viewBox="0 0 5 9" fill="#555">
              <path d="M5 0v9L0 4.500z" />
            </svg>
          </ScrollArrow>
          <ScrollThumb />
        </ScrollBar>
      </SheetBar>

      <StatusWrap>
        <StatusBar>
          <ViewButton aria-label="普通">
            <svg width="18" height="17" viewBox="0 0 18 17" fill="none" stroke="#b5b3b1" strokeWidth="1.400">
              <path d="M1 1h16v15H1zM1 6h16M1 11h16M6.300 1v15M11.700 1v15" />
            </svg>
          </ViewButton>
          <ViewButton aria-label="页面布局">
            <svg width="18" height="17" viewBox="0 0 18 17" fill="none" stroke="#b5b3b1" strokeWidth="1.400">
              <path d="M1 1h16v15H1zM4.500 3.500h9v10h-9zM6.500 6h5M6.500 8.500h5M6.500 11h5" />
            </svg>
          </ViewButton>
          <ViewButton aria-label="分页预览">
            <svg width="18" height="17" viewBox="0 0 18 17" fill="none" stroke="#b5b3b1" strokeWidth="1.400">
              <path d="M1 1h16v15H1zM1 10h10.500M6.500 1v9M11.500 1v9" />
            </svg>
          </ViewButton>
          <ZoomOut aria-label="缩小">
            <svg width="10" height="3" viewBox="0 0 10 3" stroke="#b5b3b1">
              <path d="M0 1h10" />
            </svg>
          </ZoomOut>
          <ZoomSlider type="range" min="0" max="100" defaultValue="100" aria-label="缩放" />
        </StatusBar>
      </StatusWrap>

      <TaskBar>
        <SystemButton $width={22} aria-label="搜索"><SearchShift><SearchIcon /></SearchShift></SystemButton>
        <SystemButton $width={65} aria-label="Cortana"><Ring /></SystemButton>
        {tasks.map((t) => (
          <TaskSlot key={t.name} $active={t.active}>
            <TaskButton $active={t.active} aria-label={t.name}>{t.icon}</TaskButton>
          </TaskSlot>
        ))}
        <Tray>
          <TrayButton aria-label="显示隐藏的图标">
            <svg width="16" height="9" viewBox="0 0 16 9" fill="none" stroke="#222" strokeWidth="1.500">
              <path d="m.5 8.500 7.500-7.500 7.500 7.500" />
            </svg>
          </TrayButton>
          {tray.map((t) => (
            <TrayButton key={t.name} aria-label={t.name}>{t.icon}</TrayButton>
          ))}
          <TrayButton $width={40} aria-label="搜狗输入法"><SogouIcon /></TrayButton>
          <Clock>
            <span>10:44</span>
            <span>2021/12</span>
          </Clock>
        </Tray>
      </TaskBar>
    </Window>
  </ThemeProvider>
);

export default App;
